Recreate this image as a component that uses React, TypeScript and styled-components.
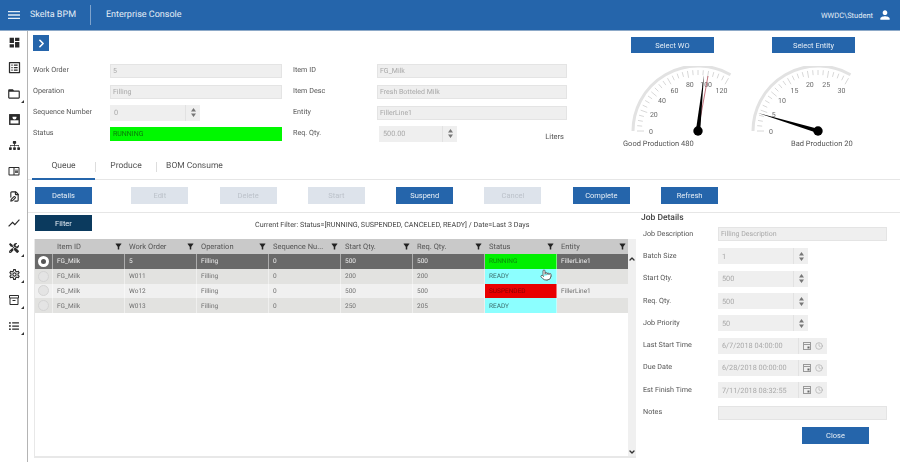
import React, { FC, ReactNode } from 'react';
import styled, { createGlobalStyle } from 'styled-components';
import { ChevronRight, ChevronUp, ChevronDown, Clock, FilePen, Pointer } from 'lucide-react';
import {
    MdDashboard, MdOutlineListAlt, MdFolderOpen, MdOutlineChromeReaderMode,
    MdShowChart, MdOutlineSettings, MdOutlineInventory2, MdMenu, MdPerson, MdFilterAlt,
} from 'react-icons/md';
import { FaSitemap, FaTools, FaListUl } from 'react-icons/fa';

const Global = createGlobalStyle`
    html, body { margin: 0; padding: 0; background: #fff; }
    * { box-sizing: border-box; }
    body { font-family: Roboto, "Liberation Sans", sans-serif; text-rendering: geometricPrecision; }
`;

const Page = styled.div`
    width: 900px;
    height: 462px;
    overflow: hidden;
    filter: blur(0.35px);
    color: #555;
`;

// top bar
const Header = styled.header`
    height: 31px;
    background: #2565ab;
    border-bottom: 1px solid #8da9c8;
    display: flex;
    align-items: center;
    color: #e4edf6;
    font-size: 9px;
    padding-left: 6px;
`;
const Product = styled.span`
    margin-left: 8px;
    width: 60px;
`;
const HeaderDivider = styled.span`
    width: 1px;
    height: 20px;
    background: #7fa3cc;
    margin-right: 15px;
`;
const UserBox = styled.div`
    margin-left: auto;
    margin-right: 8px;
    display: flex;
    align-items: center;
    gap: 5px;
    font-size: 7.5px;
`;

const Body = styled.div`
    display: flex;
    height: 431px;
`;

// left icons
const Sidebar = styled.nav`
    width: 28px;
    flex: none;
    border-right: 1.5px solid #b4b4b4;
    padding: 3px 0 0 1px;
    display: flex;
    flex-direction: column;
    align-items: center;
    gap: 9.8px;
`;
const SideItem = styled.div`
    position: relative;
    width: 16px;
    height: 16px;
    display: flex;
    align-items: center;
    justify-content: center;
    color: #2a2a2a;
`;
const Corner = styled.span`
    position: absolute;
    left: 15px;
    top: 14px;
    border-style: solid;
    border-width: 0 0 3px 3px;
    border-color: transparent transparent #333 transparent;
`;

const Main = styled.main`
    flex: 1;
    min-width: 0;
    display: flex;
    flex-direction: column;
`;

// work order summary
const TopPanel = styled.section`
    height: 127px;
    display: flex;
    padding-left: 5px;
`;
const SummaryBox = styled.div`
    width: 534px;
    padding-top: 4px;
`;
const Expander = styled.button`
    width: 16px;
    height: 16px;
    padding: 0;
    border: 0;
    background: #2565ab;
    color: #fff;
    display: flex;
    align-items: center;
    justify-content: center;
`;
const SummaryForm = styled.div`
    margin-top: 9px;
    display: grid;
    grid-template-columns: 77px 172px 11px 84px 190px;
    grid-auto-rows: 21px;
    align-items: center;
`;
const Label = styled.label`
    font-size: 7.2px;
    color: #555;
    margin-top: -2px;
`;
const Spacer = styled.span``;
const Field = styled.div<{ $width?: number; $bg?: string; $offset?: number }>`
    height: 14px;
    width: ${p => (p.$width ? `${p.$width}px` : '100%')};
    margin-left: ${p => p.$offset || 0}px;
    background: ${p => p.$bg || '#efefef'};
    border: 1px solid ${p => p.$bg || '#e4e4e4'};
    color: ${p => (p.$bg ? '#0a7a0a' : '#a8a8a8')};
    font-size: 7px;
    line-height: 12px;
    padding-left: 2px;
    white-space: nowrap;
`;
const TallField = styled.div<{ $width: number; $offset?: number }>`
    height: 16px;
    width: ${p => p.$width}px;
    margin-left: ${p => p.$offset || 0}px;
    background: #efefef;
    color: #a8a8a8;
    font-size: 7.3px;
    display: flex;
    align-items: center;
    padding-left: 4px;
`;
const FieldValue = styled.span`
    flex: 1;
    white-space: nowrap;
`;
const SpinBox = styled.span`
    width: 15px;
    height: 100%;
    flex: none;
    border-left: 1px solid #e2e2e2;
    display: flex;
    flex-direction: column;
    align-items: center;
    justify-content: center;
    color: #777;
`;
const PickBox = styled.span`
    width: 29px;
    height: 100%;
    flex: none;
    border-left: 1px solid #e2e2e2;
    display: flex;
    align-items: center;
    justify-content: center;
    gap: 4px;
    color: #999;
`;
const QtyRow = styled.div`
    display: flex;
    align-items: center;
`;
const Unit = styled.span`
    margin-left: auto;
    margin-top: 5px;
    margin-right: 3px;
    font-size: 7.5px;
    color: #555;
`;

// gauges
const GaugePanel = styled.div`
    margin-left: 61px;
    padding-top: 6px;
    display: flex;
`;
const GaugeCol = styled.div`
    width: 119.5px;
    display: flex;
    flex-direction: column;
`;
const SelectButton = styled.button<{ $offset: number }>`
    width: 83px;
    height: 16px;
    margin-left: ${p => p.$offset}px;
    margin-bottom: 13px;
    padding: 0;
    border: 0;
    background: #2565ab;
    color: #e4edf6;
    font: 7.5px Roboto, sans-serif;
`;
const GaugeCaption = styled.div<{ $offset: number }>`
    margin-left: ${p => p.$offset}px;
    font-size: 7.5px;
    line-height: 12px;
    color: #555;
    white-space: nowrap;
`;

// tabs
const TabBar = styled.div`
    height: 22px;
    border-bottom: 1px solid #e6e6e6;
    display: flex;
    align-items: stretch;
    padding-left: 4px;
`;
const Tab = styled.div<{ $active?: boolean; $width: number }>`
    width: ${p => p.$width}px;
    display: flex;
    align-items: center;
    justify-content: center;
    font-size: 8.5px;
    color: #555;
    padding-bottom: 4px;
    margin-bottom: -1px;
    border-bottom: 2px solid ${p => (p.$active ? '#2565ab' : 'transparent')};
`;
const TabDivider = styled.span`
    width: 1px;
    height: 10px;
    margin-top: 4px;
    background: #ddd;
`;

// action buttons
const Toolbar = styled.div`
    padding: 7px 0 8px 7px;
    border-bottom: 1px solid #e6e6e6;
    display: flex;
    gap: 31.3px;
`;
const ActionButton = styled.button<{ $kind: 'primary' | 'off' | 'dark'; $lead?: number }>`
    width: 57px;
    height: 17px;
    padding: 0;
    border: 0;
    margin-right: ${p => p.$lead || 0}px;
    font: 7.5px Roboto, sans-serif;
    background: ${p => (p.$kind === 'primary' ? '#2565ab' : p.$kind === 'dark' ? '#0b3a5e' : '#dde3eb')};
    color: ${p => (p.$kind === 'off' ? '#bcc2ca' : '#e8eff6')};
`;

const Lower = styled.div`
    flex: 1;
    display: flex;
    min-height: 0;
`;
const QueueSide = styled.div`
    width: 608px;
    padding: 2px 0 0 6px;
    flex: none;
`;
const FilterRow = styled.div`
    display: flex;
    align-items: center;
    padding-left: 1px;
    height: 16px;
`;
const FilterButton = styled(ActionButton)`
    height: 16px;
`;
const FilterText = styled.span`
    margin-left: 163px;
    margin-top: 2px;
    font-size: 7.2px;
    color: #444;
    white-space: nowrap;
`;

// queue grid
const GridBox = styled.div`
    position: relative;
    margin-top: 8px;
    width: 602px;
    height: 219px;
    border-bottom: 2px solid #e8e8e8;
    border-left: 1px solid #e8e8e8;
    display: flex;
`;
const GridTable = styled.div`
    flex: 1;
    min-width: 0;
`;
const HeadRow = styled.div`
    height: 15px;
    background: #c9c9c9;
    display: grid;
    grid-template-columns: 18px repeat(8, 72px);
`;
const HeadCell = styled.div`
    display: flex;
    align-items: center;
    justify-content: space-between;
    padding: 0 2px 0 4px;
    font-size: 7.5px;
    color: #555;
    white-space: nowrap;
    overflow: hidden;
`;
const DataRow = styled.div<{ $tone: 'selected' | 'even' | 'odd' }>`
    height: 14.75px;
    display: grid;
    grid-template-columns: 18px repeat(8, 72px);
    background: ${p => (p.$tone === 'selected' ? '#696969' : p.$tone === 'even' ? '#e2e2e0' : '#f0f0f0')};
    color: ${p => (p.$tone === 'selected' ? '#eee' : '#707070')};
`;
const Cell = styled.div`
    display: flex;
    align-items: center;
    padding-left: 4px;
    font-size: 6.5px;
    border-right: 1px solid rgba(255, 255, 255, 0.45);
    white-space: nowrap;
    overflow: hidden;
`;
const RadioCell = styled(Cell)`
    padding: 0;
    justify-content: center;
`;
const Radio = styled.span<{ $on?: boolean }>`
    width: 11px;
    height: 11px;
    border-radius: 50%;
    background: ${p => (p.$on ? '#555' : '#e4e4e4')};
    border: ${p => (p.$on ? '3px solid #fff' : '1px solid #d4d4d4')};
`;
const StatusCell = styled(Cell)<{ $bg: string; $fg: string }>`
    background: ${p => p.$bg};
    color: ${p => p.$fg};
`;
const ScrollTrack = styled.div`
    width: 8px;
    flex: none;
    background: #f0f0f0;
    padding-top: 16px;
    display: flex;
    flex-direction: column;
    align-items: center;
    justify-content: space-between;
    color: #333;
`;
const Cursor = styled.span`
    position: absolute;
    left: 505px;
    top: 30px;
    color: #444;
    display: flex;
`;

// job details
const JobSide = styled.aside`
    flex: 1;
    padding: 1px 0 0 5px;
`;
const JobTitle = styled.div`
    font-size: 8.5px;
    font-weight: 500;
    line-height: 9px;
    color: #444;
    height: 9px;
`;
const JobForm = styled.div`
    margin-left: 2px;
    display: grid;
    grid-template-columns: 75px 169px;
    grid-auto-rows: 22.3px;
    align-items: center;
`;
const CloseButton = styled(ActionButton)`
    display: block;
    width: 67px;
    margin: 3px 0 0 161px;
`;

const SpinArrows: FC = () => (
    <SpinBox>
        <svg width="5" height="9" viewBox="0 0 5 9" fill="currentColor">
            <path d="M2.5 0 5 3.4H0zM2.5 9 0 5.6h5z" />
        </svg>
    </SpinBox>
);

const DatePick: FC = () => (
    <PickBox>
        <svg width="8" height="8" viewBox="0 0 8 8" fill="none" stroke="currentColor">
            <rect x="0.5" y="0.5" width="7" height="7" />
            <path d="M0.5 2.5h7" />
            <rect x="4.5" y="4.5" width="2" height="2" fill="#666" stroke="none" />
        </svg>
        <Clock size={8} strokeWidth={1.5} />
    </PickBox>
);

const Spinner: FC<{ value: string; width: number; offset?: number }> = ({ value, width, offset }) => (
    <TallField $width={width} $offset={offset}>
        <FieldValue>{value}</FieldValue>
        <SpinArrows />
    </TallField>
);

const DateField: FC<{ value: string }> = ({ value }) => (
    <TallField $width={109}>
        <FieldValue>{value}</FieldValue>
        <DatePick />
    </TallField>
);

// drawn by hand, the icon packs have no box with this dark top band
const InboxIcon: FC = () => (
    <svg width="11" height="11" viewBox="0 0 14 14">
        <rect x="1" y="1" width="12" height="12" fill="none" stroke="currentColor" strokeWidth="1.8" />
        <rect x="1" y="1" width="12" height="7" fill="currentColor" />
        <path d="M4.5 4.5a2.5 2.5 0 0 0 5 0v-1h-5z" fill="#fff" />
    </svg>
);

interface GaugeProps {
    max: number;
    labelStep: number;
    tip: [number, number];
    redTip?: [number, number];
}

const polar = (deg: number, r: number): [number, number] => {
    const a = (deg * Math.PI) / 180;
    return [70 + r * Math.sin(a), 65 - r * Math.cos(a)];
};

const Gauge: FC<GaugeProps> = ({ max, labelStep, tip, redTip }) => {
    const [ax, ay] = polar(-90, 65);
    const [bx, by] = polar(30, 65);
    const ticks: ReactNode[] = [];
    for (let d = -90; d <= 30; d += 5) {
        const major = (d + 90) % 20 === 0;
        const [x1, y1] = polar(d, 61);
        const [x2, y2] = polar(d, major ? 54 : 56);
        ticks.push(<line key={d} x1={x1} y1={y1} x2={x2} y2={y2} stroke="#d8d8d8" strokeWidth={1} />);
    }
    const labels: ReactNode[] = [];
    for (let v = 0; v <= max; v += labelStep) {
        const [x, y] = polar(-90 + (v / max) * 120, 47);
        labels.push(
            <text key={v} x={x} y={y + 2.5} fontSize="7" fill="#666" textAnchor="middle" fontFamily="Roboto, sans-serif">
                {v}
            </text>
        );
    }
    // needle wedge: wide at hub, thin at tip
    const dx = tip[0] - 70;
    const dy = tip[1] - 65;
    const len = Math.hypot(dx, dy);
    const nx = (-dy / len) * 2.2;
    const ny = (dx / len) * 2.2;
    return (
        <svg width="120" height="72" viewBox="0 0 120 72">
            <path d={`M${ax} ${ay} A65 65 0 0 1 ${bx} ${by}`} fill="none" stroke="#e2e2e2" strokeWidth="3" />
            {ticks}
            {labels}
            {redTip && <line x1="70" y1="65" x2={redTip[0]} y2={redTip[1]} stroke="#b5525e" strokeWidth="0.8" />}
            <polygon points={`${70 + nx},${65 + ny} ${tip[0]},${tip[1]} ${70 - nx},${65 - ny}`} fill="#000" />
            <circle cx="70" cy="65" r="4.7" fill="#000" />
        </svg>
    );
};

const sideIcons: { icon: ReactNode; corner?: boolean }[] = [
    { icon: <MdDashboard size={13} /> },
    { icon: <MdOutlineListAlt size={15} /> },
    { icon: <MdFolderOpen size={14} />, corner: true },
    { icon: <InboxIcon /> },
    { icon: <FaSitemap size={11} /> },
    { icon: <MdOutlineChromeReaderMode size={12} /> },
    { icon: <FilePen size={11} strokeWidth={2.4} /> },
    { icon: <MdShowChart size={14} /> },
    { icon: <FaTools size={10} />, corner: true },
    { icon: <MdOutlineSettings size={13} />, corner: true },
    { icon: <MdOutlineInventory2 size={12} />, corner: true },
    { icon: <FaListUl size={10} />, corner: true },
];

const actions: { text: string; kind: 'primary' | 'off'; lead?: number }[] = [
    { text: 'Details', kind: 'primary', lead: 8 },
    { text: 'Edit', kind: 'off' },
    { text: 'Delete', kind: 'off' },
    { text: 'Start', kind: 'off' },
    { text: 'Suspend', kind: 'primary' },
    { text: 'Cancel', kind: 'off' },
    { text: 'Complete', kind: 'primary' },
    { text: 'Refresh', kind: 'primary' },
];

const columns = ['Item ID', 'Work Order', 'Operation', 'Sequence Nu...', 'Start Qty.', 'Req. Qty.', 'Status', 'Entity'];

const statusColors: Record<string, { bg: string; fg: string }> = {
    RUNNING: { bg: '#00f000', fg: '#0a8a0a' },
    READY: { bg: '#8cffff', fg: '#3a6a6a' },
    SUSPENDED: { bg: '#e80000', fg: '#8a0000' },
};

const rows = [
    { order: '5', start: '500', req: '500', status: 'RUNNING', entity: 'FillerLine1', tone: 'selected' as const },
    { order: 'W011', start: '200', req: '200', status: 'READY', entity: '', tone: 'even' as const },
    { order: 'Wo12', start: '500', req: '500', status: 'SUSPENDED', entity: 'FillerLine1', tone: 'odd' as const },
    { order: 'W013', start: '250', req: '205', status: 'READY', entity: '', tone: 'even' as const },
];

const App: FC = () => {
    return (
        <Page>
            <Global />
            <Header>
                <MdMenu size={16} />
                <Product>Skelta BPM</Product>
                <HeaderDivider />
                <span>Enterprise Console</span>
                <UserBox>
                    WWDC\Student
                    <MdPerson size={14} color="#fff" />
                </UserBox>
            </Header>
            <Body>
                <Sidebar>
                    {sideIcons.map((s, i) => (
                        <SideItem key={i}>
                            {s.icon}
                            {s.corner && <Corner />}
                        </SideItem>
                    ))}
                </Sidebar>
                <Main>
                    <TopPanel>
                        <SummaryBox>
                            <Expander><ChevronRight size={13} strokeWidth={3} /></Expander>
                            <SummaryForm>
                                <Label>Work Order</Label>
                                <Field>5</Field>
                                <Spacer />
                                <Label>Item ID</Label>
                                <Field>FG_Milk</Field>

                                <Label>Operation</Label>
                                <Field>Filling</Field>
                                <Spacer />
                                <Label>Item Desc</Label>
                                <Field>Fresh Botteled Milk</Field>

                                <Label>Sequence Number</Label>
                                <Spinner value="0" width={90} />
                                <Spacer />
                                <Label>Entity</Label>
                                <Field>FillerLine1</Field>

                                <Label>Status</Label>
                                <Field $bg="#00f800">RUNNING</Field>
                                <Spacer />
                                <Label>Req. Qty.</Label>
                                <QtyRow>
                                    <Spinner value="500.00" width={78} offset={2} />
                                    <Unit>Liters</Unit>
                                </QtyRow>
                            </SummaryForm>
                        </SummaryBox>
                        <GaugePanel>
                            <GaugeCol>
                                <SelectButton $offset={3}>Select WO</SelectButton>
                                <Gauge max={120} labelStep={20} tip={[76, 9]} redTip={[80, 10]} />
                                <GaugeCaption $offset={-5}>Good Production 480</GaugeCaption>
                            </GaugeCol>
                            <GaugeCol>
                                <SelectButton $offset={24.5}>Select Entity</SelectButton>
                                <Gauge max={30} labelStep={5} tip={[10, 47]} />
                                <GaugeCaption $offset={43.5}>Bad Production 20</GaugeCaption>
                            </GaugeCol>
                        </GaugePanel>
                    </TopPanel>

                    <TabBar>
                        <Tab $active $width={63}>Queue</Tab>
                        <TabDivider />
                        <Tab $width={60}>Produce</Tab>
                        <TabDivider />
                        <Tab $width={75}>BOM Consume</Tab>
                    </TabBar>

                    <Toolbar>
                        {actions.map(a => (
                            <ActionButton key={a.text} $kind={a.kind} $lead={a.lead}>{a.text}</ActionButton>
                        ))}
                    </Toolbar>

                    <Lower>
                        <QueueSide>
                            <FilterRow>
                                <FilterButton $kind="dark">Filter</FilterButton>
                                <FilterText>Current Filter: Status=[RUNNING, SUSPENDED, CANCELED, READY] / Date=Last 3 Days</FilterText>
                            </FilterRow>
                            <GridBox>
                                <GridTable>
                                    <HeadRow>
                                        <span />
                                        {columns.map(c => (
                                            <HeadCell key={c}>
                                                {c}
                                                <MdFilterAlt size={9} color="#222" />
                                            </HeadCell>
                                        ))}
                                    </HeadRow>
                                    {rows.map(r => (
                                        <DataRow key={r.order} $tone={r.tone}>
                                            <RadioCell><Radio $on={r.tone === 'selected'} /></RadioCell>
                                            <Cell>FG_Milk</Cell>
                                            <Cell>{r.order}</Cell>
                                            <Cell>Filling</Cell>
                                            <Cell>0</Cell>
                                            <Cell>{r.start}</Cell>
                                            <Cell>{r.req}</Cell>
                                            <StatusCell $bg={statusColors[r.status].bg} $fg={statusColors[r.status].fg}>
                                                {r.status}
                                            </StatusCell>
                                            <Cell>{r.entity}</Cell>
                                        </DataRow>
                                    ))}
                                </GridTable>
                                <ScrollTrack>
                                    <ChevronUp size={8} strokeWidth={4} />
                                    <ChevronDown size={8} strokeWidth={4} />
                                </ScrollTrack>
                                <Cursor><Pointer size={12} fill="#fff" strokeWidth={1.6} /></Cursor>
                            </GridBox>
                        </QueueSide>

                        <JobSide>
                            <JobTitle>Job Details</JobTitle>
                            <JobForm>
                                <Label>Job Description</Label>
                                <Field>Filling Description</Field>
                                <Label>Batch Size</Label>
                                <Spinner value="1" width={90} />
                                <Label>Start Qty.</Label>
                                <Spinner value="500" width={90} />
                                <Label>Req. Qty.</Label>
                                <Spinner value="500" width={90} />
                                <Label>Job Priority</Label>
                                <Spinner value="50" width={90} />
                                <Label>Last Start Time</Label>
                                <DateField value="6/7/2018 04:00:00" />
                                <Label>Due Date</Label>
                                <DateField value="6/28/2018 00:00:00" />
                                <Label>Est Finish Time</Label>
                                <DateField value="7/11/2018 08:32:55" />
                                <Label>Notes</Label>
                                <Field />
                            </JobForm>
                            <CloseButton $kind="primary">Close</CloseButton>
                        </JobSide>
                    </Lower>
                </Main>
            </Body>
        </Page>
    );
};

export default App;
